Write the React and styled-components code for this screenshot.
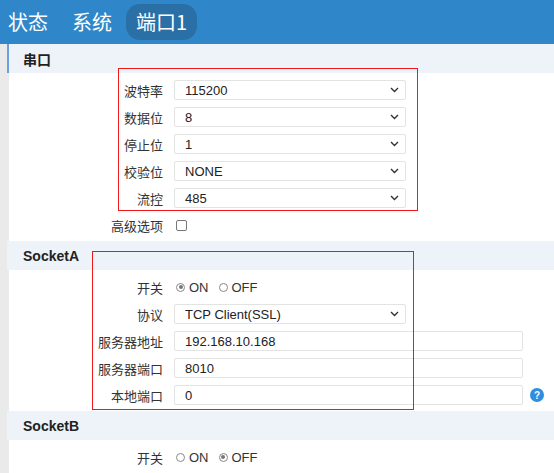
import React from 'react';
import styled, { createGlobalStyle } from 'styled-components';

const Global = createGlobalStyle`
  body { margin: 0; font-family: "Microsoft YaHei", "Noto Sans CJK SC", "Liberation Sans", sans-serif; background: #fff; }
`;

const Header = styled.div`
  height: 44px;
  background: #2f87c9;
  display: flex;
  align-items: center;
  padding-left: 8px;
  gap: 4px;
`;
const Tab = styled.div`
  color: #fff;
  font-size: 20px;
  padding: 3px 10px 4px;
  margin-left: ${p => (p.first ? '-10px' : '0')};
  border-radius: 14px;
  background: ${p => (p.active ? '#2a6fa6' : 'transparent')};
`;
const Body = styled.div`
  position: relative;
  border-left: 9px solid #eaeaea;
  min-height: 429px;
`;
const SectionHead = styled.div`
  height: 29px;
  display: flex;
  align-items: center;
  padding-left: 14px;
  background: #eef2f9;
  border-left: 2px solid ${p => (p.accent ? '#6a9fe0' : 'transparent')};
  margin-left: -2px;
  font-weight: bold;
  font-size: 14px;
  color: #222;
  font-family: "Liberation Sans", "Noto Sans CJK SC", sans-serif;
  margin-top: ${p => p.mt || 0}px;
`;
const Rows = styled.div`
  padding: 6px 0 5px;
  display: flex;
  flex-direction: column;
  gap: 5px;
`;
const Row = styled.div`
  display: flex;
  align-items: center;
  height: 22px;
  font-size: 13px;
  color: #333;
`;
const Label = styled.div`
  width: 154px;
  text-align: right;
  padding-right: 11px;
`;
const Box = styled.div`
  width: ${p => p.w}px;
  height: 20px;
  border: 1px solid #e3e3e3;
  border-radius: 2px;
  box-sizing: border-box;
  display: flex;
  align-items: center;
  justify-content: space-between;
  padding: 0 6px 0 10px;
  font-family: "Liberation Sans", sans-serif;
  font-size: 13px;
  color: #222;
`;
const Radio = styled.span`
  display: inline-block;
  width: 9px;
  height: 9px;
  border: 1px solid #888;
  border-radius: 50%;
  margin: 0 4px 0 2px;
  box-sizing: border-box;
  position: relative;
  &::after {
    content: '';
    display: ${p => (p.on ? 'block' : 'none')};
    position: absolute;
    inset: 1.5px;
    border-radius: 50%;
    background: #777;
  }
`;
const Opt = styled.span`
  display: inline-flex;
  align-items: center;
  margin-right: 8px;
  font-family: "Liberation Sans", sans-serif;
`;
const Check = styled.span`
  width: 9px;
  height: 9px;
  border: 1px solid #777;
  border-radius: 2px;
  margin-left: 2px;
`;
const Help = styled.span`
  width: 14px;
  height: 14px;
  border-radius: 50%;
  background: #2e8ee0;
  color: #fff;
  font-size: 10px;
  font-weight: bold;
  display: flex;
  align-items: center;
  justify-content: center;
  margin-left: 7px;
  font-family: "Liberation Sans", sans-serif;
`;
const RedBox = styled.div`
  position: absolute;
  border: 1px solid #f01818;
  left: ${p => p.x}px;
  top: ${p => p.y}px;
  width: ${p => p.w}px;
  height: ${p => p.h}px;
  pointer-events: none;
`;

const Chevron = () => (
  <svg width="9" height="6" viewBox="0 0 9 6"><path d="M1 1l3.5 3.5L8 1" fill="none" stroke="#333" strokeWidth="1.4" /></svg>
);

const Select = ({ v }) => (
  <Box w={232}>{v}<Chevron /></Box>
);

export default function App() {
  return (
    <>
      <Global />
      <Header>
        <Tab first>状态</Tab>
        <Tab>系统</Tab>
        <Tab active>端口1</Tab>
      </Header>
      <Body>
        <SectionHead accent>串口</SectionHead>
        <Rows>
          <Row><Label>波特率</Label><Select v="115200" /></Row>
          <Row><Label>数据位</Label><Select v="8" /></Row>
          <Row><Label>停止位</Label><Select v="1" /></Row>
          <Row><Label>校验位</Label><Select v="NONE" /></Row>
          <Row><Label>流控</Label><Select v="485" /></Row>
          <Row><Label>高级选项</Label><Check /></Row>
        </Rows>
        <SectionHead>SocketA</SectionHead>
        <Rows>
          <Row><Label>开关</Label><Opt><Radio on />ON</Opt><Opt><Radio />OFF</Opt></Row>
          <Row><Label>协议</Label><Select v="TCP Client(SSL)" /></Row>
          <Row><Label>服务器地址</Label><Box w={349}>192.168.10.168</Box></Row>
          <Row><Label>服务器端口</Label><Box w={349}>8010</Box></Row>
          <Row><Label>本地端口</Label><Box w={349}>0</Box><Help>?</Help></Row>
        </Rows>
        <SectionHead>SocketB</SectionHead>
        <Rows>
          <Row><Label>开关</Label><Opt><Radio />ON</Opt><Opt><Radio on />OFF</Opt></Row>
        </Rows>
        <RedBox x={109} y={24} w={298} h={141} />
        <RedBox x={83} y={207} w={320} h={157} />
      </Body>
    </>
  );
}
